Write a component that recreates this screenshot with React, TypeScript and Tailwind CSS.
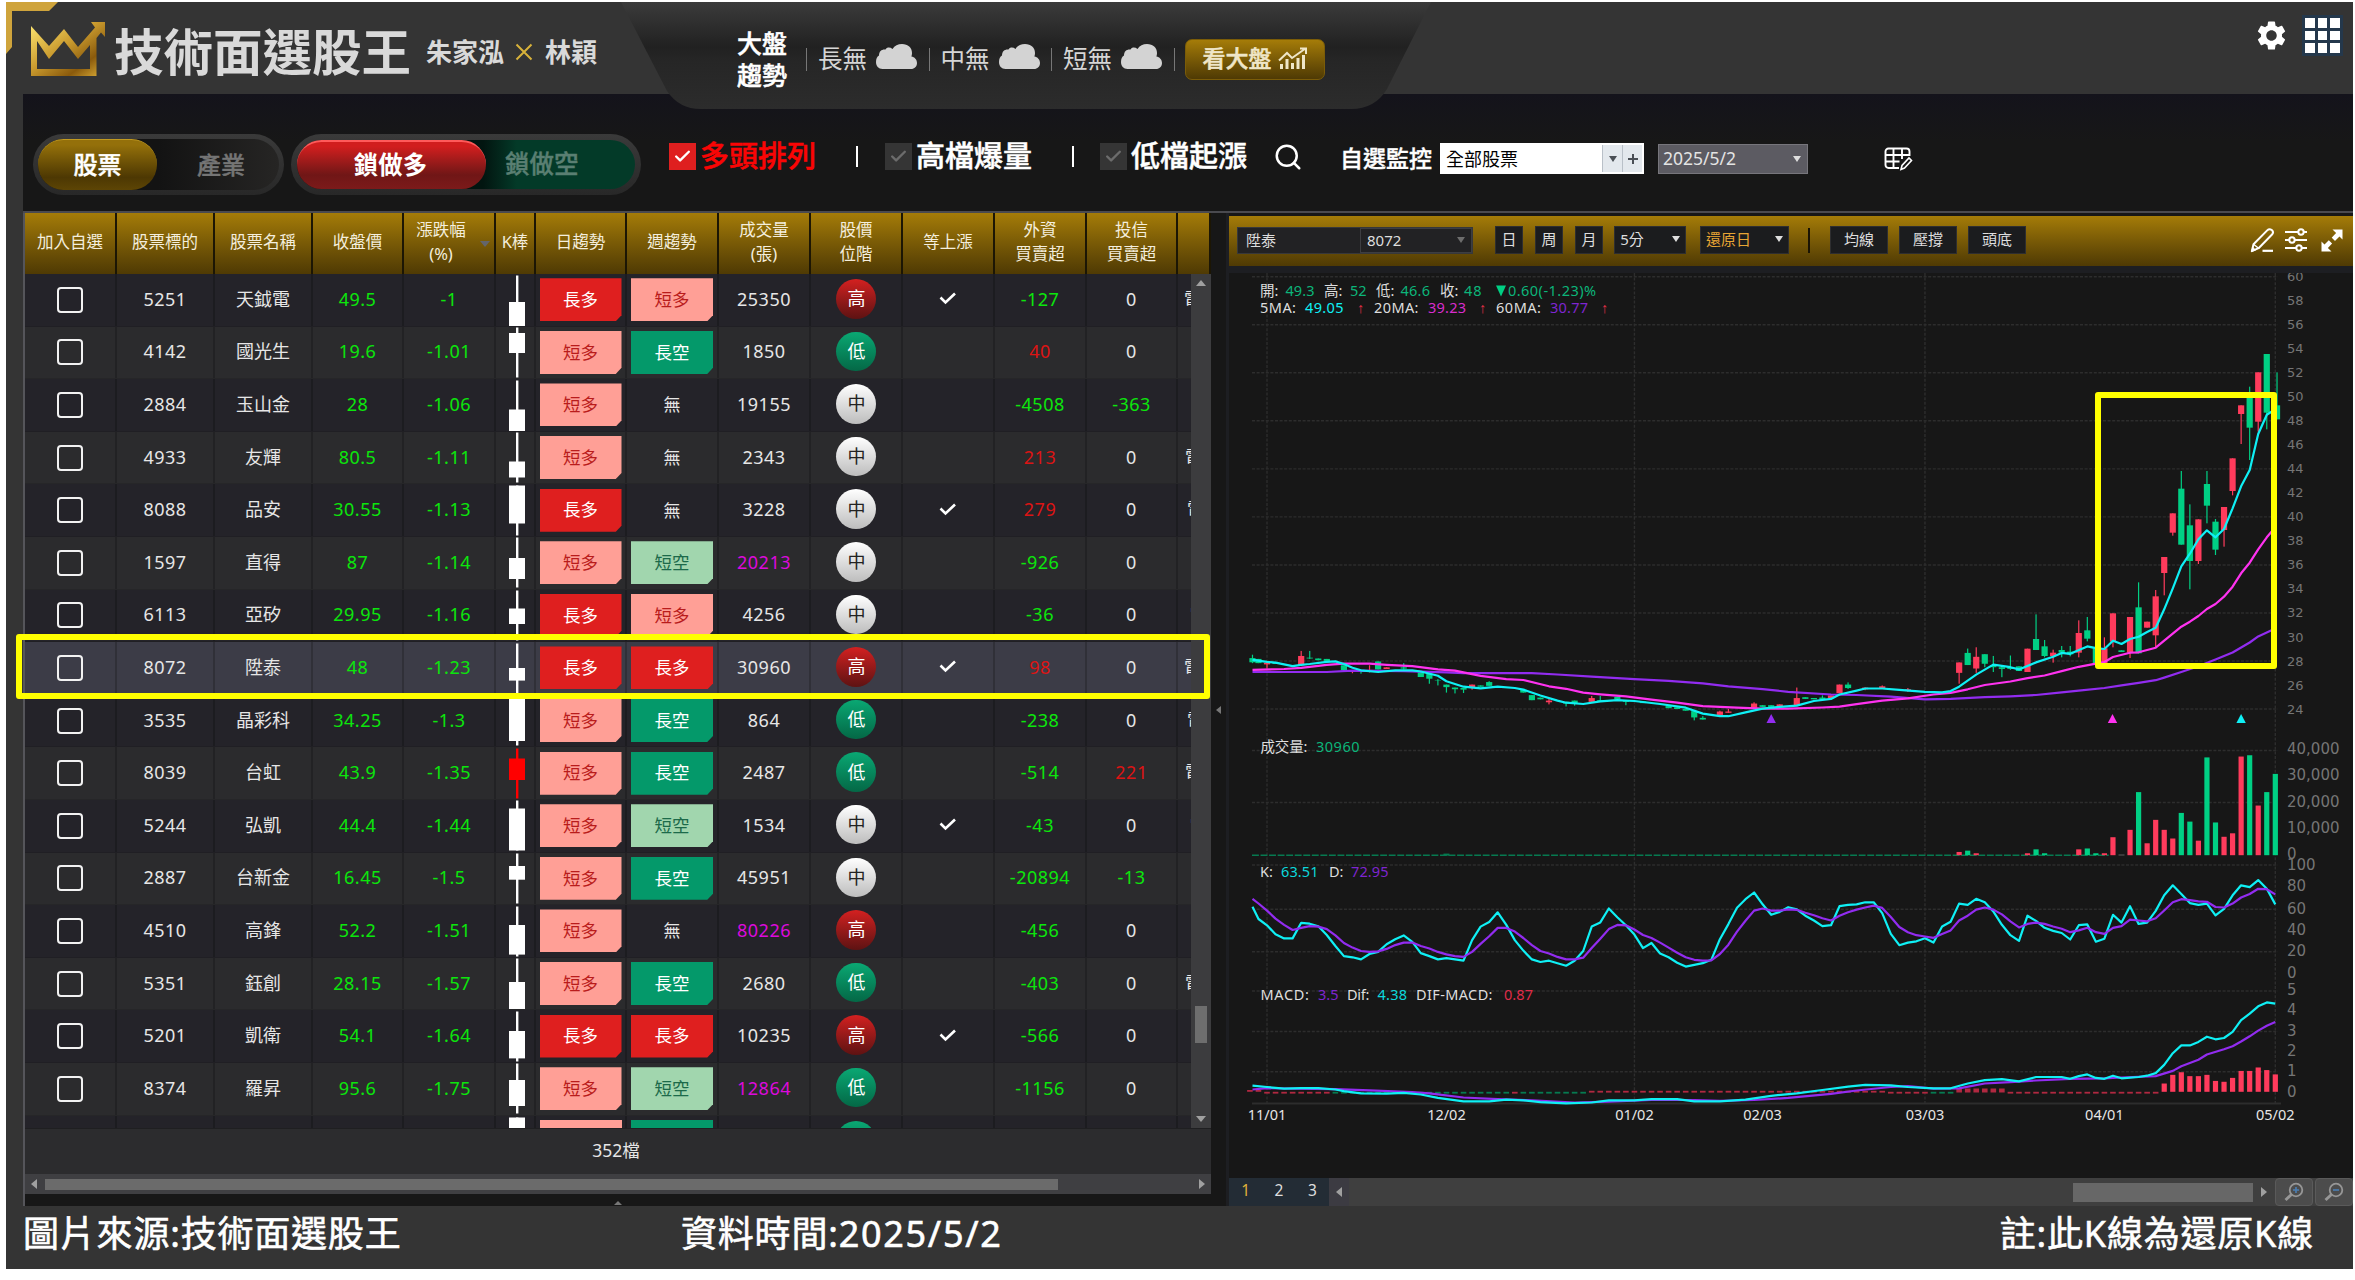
import type { ReactNode } from 'react'
import { Search, Check } from 'lucide-react'
import { MdSettings } from 'react-icons/md'

// ── Stock table data ──────────────────────────────────────────────────────────

type Trend = '長多' | '短多' | '長空' | '短空' | '無'
type Level = '高' | '中' | '低'

type Stock = {
  code: string
  name: string
  price: string
  change: string
  k: [number, number]
  kRed?: boolean
  day: Trend
  week: Trend
  volume: string
  hot?: boolean
  level: Level
  rising?: boolean
  foreign: string
  trust: string
  tail?: number
}

const STOCKS: Stock[] = [
  { code: '5251', name: '天鉞電', price: '49.5', change: '-1', k: [28, 52], day: '長多', week: '短多', volume: '25350', level: '高', rising: true, foreign: '-127', trust: '0', tail: 6 },
  { code: '4142', name: '國光生', price: '19.6', change: '-1.01', k: [7, 27], day: '短多', week: '長空', volume: '1850', level: '低', foreign: '40', trust: '0' },
  { code: '2884', name: '玉山金', price: '28', change: '-1.06', k: [30.5, 52], day: '短多', week: '無', volume: '19155', level: '中', foreign: '-4508', trust: '-363' },
  { code: '4933', name: '友輝', price: '80.5', change: '-1.11', k: [30.5, 46.5], day: '短多', week: '無', volume: '2343', level: '中', foreign: '213', trust: '0', tail: 7 },
  { code: '8088', name: '品安', price: '30.55', change: '-1.13', k: [1.5, 39.5], day: '長多', week: '無', volume: '3228', level: '中', rising: true, foreign: '279', trust: '0', tail: 9 },
  { code: '1597', name: '直得', price: '87', change: '-1.14', k: [22, 43], day: '短多', week: '短空', volume: '20213', hot: true, level: '中', foreign: '-926', trust: '0' },
  { code: '6113', name: '亞矽', price: '29.95', change: '-1.16', k: [19.5, 35], day: '長多', week: '短多', volume: '4256', level: '中', foreign: '-36', trust: '0', tail: 12 },
  { code: '8072', name: '陞泰', price: '48', change: '-1.23', k: [26, 38.6], day: '長多', week: '長多', volume: '30960', level: '高', rising: true, foreign: '98', trust: '0', tail: 6 },
  { code: '3535', name: '晶彩科', price: '34.25', change: '-1.3', k: [1.5, 47], day: '短多', week: '長空', volume: '864', level: '低', foreign: '-238', trust: '0', tail: 9 },
  { code: '8039', name: '台虹', price: '43.9', change: '-1.35', k: [11.5, 33], kRed: true, day: '短多', week: '長空', volume: '2487', level: '低', foreign: '-514', trust: '221', tail: 7 },
  { code: '5244', name: '弘凱', price: '44.4', change: '-1.44', k: [9.5, 51.5], day: '短多', week: '短空', volume: '1534', level: '中', rising: true, foreign: '-43', trust: '0', tail: 12 },
  { code: '2887', name: '台新金', price: '16.45', change: '-1.5', k: [14, 27.7], day: '短多', week: '長空', volume: '45951', level: '中', foreign: '-20894', trust: '-13' },
  { code: '4510', name: '高鋒', price: '52.2', change: '-1.51', k: [20, 49.6], day: '短多', week: '無', volume: '80226', hot: true, level: '高', foreign: '-456', trust: '0' },
  { code: '5351', name: '鈺創', price: '28.15', change: '-1.57', k: [25, 52], day: '短多', week: '長空', volume: '2680', level: '低', foreign: '-403', trust: '0', tail: 7 },
  { code: '5201', name: '凱衛', price: '54.1', change: '-1.64', k: [21, 48.4], day: '長多', week: '長多', volume: '10235', level: '高', rising: true, foreign: '-566', trust: '0' },
  { code: '8374', name: '羅昇', price: '95.6', change: '-1.75', k: [18, 44], day: '短多', week: '短空', volume: '12864', hot: true, level: '低', foreign: '-1156', trust: '0' },
]

const HEADERS: string[][] = [
  ['加入自選'], ['股票標的'], ['股票名稱'], ['收盤價'], ['漲跌幅', '(%)'], ['K棒'], ['日趨勢'], ['週趨勢'],
  ['成交量', '(張)'], ['股價', '位階'], ['等上漲'], ['外資', '買賣超'], ['投信', '買賣超'], [],
]

const COLS = 'grid grid-cols-[92px_98px_98px_91px_92px_40px_91px_92px_92px_92px_92px_92px_91px_1fr]'

const TREND_STYLES: Record<Trend, string> = {
  長多: 'bg-[#df1f1f] text-white',
  短多: 'bg-[#ff9f96] text-[#b91c1c]',
  長空: 'bg-[#04996a] text-white',
  短空: 'bg-[#a1d6ae] text-[#1c6a4a]',
  無: '',
}

const LEVEL_STYLES: Record<Level, string> = {
  高: 'from-[#d42020] to-[#5e1212] text-white',
  中: 'from-white to-[#bdbdbd] text-[#222]',
  低: 'from-[#0aa873] to-[#046846] text-white',
}

// ── Table pieces ──────────────────────────────────────────────────────────────

function Cell({ children, className = '' }: { children?: ReactNode; className?: string }) {
  return (
    <div className={`flex h-full min-w-0 items-center justify-center overflow-hidden border-r-2 border-black/20 ${className}`}>
      {children}
    </div>
  )
}

function TrendTag({ trend }: { trend: Trend }) {
  if (trend === '無') return <span className="text-[17px]">無</span>
  return (
    <span
      className={`flex h-[43px] w-[82px] shrink-0 items-center justify-center text-[17.5px] [clip-path:polygon(0_0,100%_0,100%_86%,93%_100%,0_100%)] ${TREND_STYLES[trend]}`}
    >
      {trend}
    </span>
  )
}

function signColour(value: string) {
  if (value.startsWith('-')) return 'text-[#0ce60c]'
  return value === '0' ? 'text-[#e6e6e6]' : 'text-[#dc1414]'
}

function KBar({ body, red }: { body: [number, number]; red?: boolean }) {
  const fill = red ? '#ff0000' : '#ffffff'
  return (
    <svg className="block shrink-0" width="16" height="52.6" viewBox="0 0 16 52.6">
      <rect x="7" y="1.5" width="2.4" height="50" fill={fill} />
      <rect x="0" y={body[0]} width="16" height={body[1] - body[0]} fill={fill} />
    </svg>
  )
}

function StockRow({ stock, index }: { stock: Stock; index: number }) {
  const bg = stock.code === '8072' ? 'bg-[#3c3c47]' : index % 2 ? 'bg-[#2b2b2d]' : 'bg-[#242329]'
  return (
    <div className={`${COLS} h-[52.6px] shrink-0 border-b border-black/10 text-[18px] tracking-[0.5px] text-[#e6e6e6] ${bg}`}>
      <Cell>
        <span className="size-[26px] rounded-[4px] border-[2.5px] border-[#f2f2f2]" />
      </Cell>
      <Cell className="pb-0.5">{stock.code}</Cell>
      <Cell className="pb-0.5 tracking-normal">{stock.name}</Cell>
      <Cell className="pb-0.5 text-[#0ce60c]">{stock.price}</Cell>
      <Cell className="pb-0.5 text-[#0ce60c]">{stock.change}</Cell>
      <Cell className="pl-[3px]">
        <KBar body={stock.k} red={stock.kRed} />
      </Cell>
      <Cell className="tracking-normal"><TrendTag trend={stock.day} /></Cell>
      <Cell className="tracking-normal"><TrendTag trend={stock.week} /></Cell>
      <Cell className={`pb-0.5 ${stock.hot ? 'text-[#dc0adc]' : ''}`}>{stock.volume}</Cell>
      <Cell className="pb-0.5">
        <span className={`flex size-[39.5px] shrink-0 items-center justify-center rounded-full bg-linear-to-b pb-px pl-px text-[18px] tracking-normal ${LEVEL_STYLES[stock.level]}`}>
          {stock.level}
        </span>
      </Cell>
      <Cell className="pb-0.5">
        {stock.rising && (
          <svg width="18" height="13" viewBox="0 0 18 13" fill="none" stroke="#fff" strokeWidth="2.6">
            <path d="M1.5 5.5 6.5 10.5 16 1.5" />
          </svg>
        )}
      </Cell>
      <Cell className={`pb-0.5 ${signColour(stock.foreign)}`}>{stock.foreign}</Cell>
      <Cell className={`pb-0.5 ${signColour(stock.trust)}`}>{stock.trust}</Cell>
      <div className="flex items-center overflow-hidden pb-0.5">
        {stock.tail && <span style={{ paddingLeft: stock.tail }}>電</span>}
      </div>
    </div>
  )
}

function StockTable() {
  return (
    <section className="flex w-[1188px] shrink-0 flex-col border-l-2 border-[#55555a]">
      <div className={`${COLS} h-[61px] bg-linear-to-b from-[#a57c08] to-[#4f3a04] text-[16.5px] leading-[24px] text-[#f4eedd]`}>
        {HEADERS.map((lines, i) => (
          <div key={i} className={`relative flex flex-col items-center justify-center whitespace-nowrap border-r-2 border-[#1c1604] pb-1 ${i === 13 ? 'border-r-0' : ''} ${i === 4 ? 'pr-4' : ''}`}>
            {lines.map((line) => (
              <span key={line}>{line}</span>
            ))}
            {i === 4 && (
              <svg className="absolute right-1 top-7" width="10" height="6"><path d="M0 0h10L5 6z" fill="#63656b" /></svg>
            )}
          </div>
        ))}
      </div>

      <div className="flex h-[854px]">
        <div className="flex min-w-0 flex-1 flex-col overflow-hidden">
          {STOCKS.map((stock, i) => (
            <StockRow key={stock.code} stock={stock} index={i} />
          ))}
          <div className={`${COLS} h-[52.6px] shrink-0 bg-[#242329]`}>
            <Cell /><Cell /><Cell /><Cell /><Cell />
            <Cell className="pl-[3px]"><KBar body={[1.5, 40]} /></Cell>
            <Cell><span className="h-[43px] w-[82px] bg-[#ff9f96]" /></Cell>
            <Cell><span className="h-[43px] w-[82px] bg-[#04996a]" /></Cell>
            <Cell />
            <Cell className="pb-0.5"><span className="size-[39.5px] rounded-full bg-linear-to-b from-[#0aa873] to-[#046846]" /></Cell>
            <Cell /><Cell /><Cell />
          </div>
        </div>
        <div className="flex w-5 flex-col items-center bg-[#3c3c3e] py-1.5">
          <svg width="10" height="6"><path d="M0 6h10L5 0z" fill="#a0a0a0" /></svg>
          <div className="mt-[720px] h-[37px] w-3 bg-[#6e6e6e]" />
          <svg className="mt-auto" width="10" height="6"><path d="M0 0h10L5 6z" fill="#a0a0a0" /></svg>
        </div>
      </div>

      <div className="flex h-[46px] items-center justify-center border-t border-[#1f1f21] bg-[#2c2c2e] pb-0.5 pr-1 text-[17.5px] text-[#e6e6e6]">352檔</div>
      <div className="flex h-5 items-center bg-[#3f3f42] px-1.5">
        <svg width="6" height="10"><path d="M6 0v10L0 5z" fill="#a0a0a0" /></svg>
        <div className="ml-2 h-[11px] w-[1013px] bg-[#6b6b6b]" />
        <svg className="ml-auto" width="6" height="10"><path d="M0 0v10L6 5z" fill="#a0a0a0" /></svg>
      </div>
      <div className="flex h-[11px] items-end justify-center bg-[#171717]">
        <svg width="8" height="4"><path d="M0 4h8L4 0z" fill="#777" /></svg>
      </div>
    </section>
  )
}

// ── Chart ─────────────────────────────────────────────────────────────────────

const UP = '#ff3b5c'
const DOWN = '#00d084'
const CYAN = '#0ff0f5'
const PINK = '#ff32f0'
const PURPLE = '#922cf0'

const ORIGIN_X = 1267
const STEP = 8.545
const xAt = (i: number) => ORIGIN_X + STEP * i

// three zoom factors the samples were stored with
const wide = (y: number) => 600 + y / 2.376
const mid = (y: number) => 600 + y / 2.306
const close = (y: number) => 250 + y / 3

type Scale = (y: number) => number

function pairs(scale: Scale, flat: number[]) {
  const out: string[] = []
  for (let n = 0; n < flat.length; n += 2) {
    out.push(`${xAt(flat[n]).toFixed(1)},${scale(flat[n + 1]).toFixed(1)}`)
  }
  return out.join(' ')
}

function run(scale: Scale, start: number, ys: number[]) {
  return pairs(scale, ys.flatMap((y, n) => [start + n, y]))
}

const MA5 = [
  pairs(wide, [-1.7, 142, 0, 147, 1, 149, 3, 157, 4, 154, 5, 152, 7, 147, 8, 146, 9, 152, 10, 161, 11, 167, 13, 171, 15, 167, 17, 167, 18, 170, 20, 180, 21, 193, 23, 206, 25, 210, 27, 206, 29, 209, 30, 213, 32, 227, 34, 239, 35, 244, 37, 247, 39, 241, 41, 238, 43, 240, 46, 247, 49, 256, 51, 270, 53, 276, 54, 276, 56, 267, 58, 258, 60, 254, 62, 251]),
  pairs(mid, [64, 233, 66, 228, 67, 218, 69, 209, 70, 204, 72, 204, 74, 207, 77, 212, 79, 213, 80, 210, 81, 200, 83, 172, 85, 149, 87, 155, 88, 160, 90, 144, 92, 131, 93, 122, 94, 124, 96, 107, 97, 111]),
  run(close, 98, [1197, 1172, 1182, 1167, 1160, 1146, 1133, 1078, 1015, 949, 911, 868, 841, 862, 837, 775, 709, 660, 552, 494, 478]),
].join(' ')

const MA20 = [
  pairs(wide, [-1.7, 166, 2, 164, 4, 161, 7, 154, 9, 151, 12, 151, 14, 154, 17, 157, 20, 165, 22, 168, 25, 180, 28, 188, 30, 190, 33, 205, 35, 211, 37, 220, 39, 224, 42, 229, 45, 237, 48, 244, 51, 252, 55, 256, 58, 258, 61, 258]),
  pairs(mid, [65, 248, 67, 246, 69, 240, 72, 232, 75, 227, 78, 218, 80, 214, 82, 206, 84, 196, 87, 188, 89, 180, 91, 174, 93, 164, 95, 154, 97, 147]),
  pairs(close, [98, 1236, 99, 1221, 101, 1208, 102, 1207, 104, 1193, 105, 1172, 107, 1130, 108, 1115, 109, 1098, 110, 1077, 111, 1062, 112, 1040, 113, 1010, 114, 970, 115, 938, 116, 898, 117, 862, 118, 832]),
].join(' ')

const MA60 = [
  pairs(wide, [-1.7, 171, 7, 171, 10, 168, 16, 169, 21, 172, 23, 174, 31, 174, 34, 177, 38, 182, 43, 188, 47, 192, 51, 198, 54, 205, 58, 212, 61, 218]),
  pairs(mid, [66, 218, 69, 219, 73, 223, 77, 229, 80, 228, 84, 224, 87, 222, 90, 219, 93, 213, 95, 209, 98, 203, 100, 197, 102, 191, 104, 185, 105, 179, 107, 166, 109, 153, 111, 137, 113, 121, 115, 98, 116, 84, 118, 66]),
].join(' ')

const K_LINE = [
  pairs(wide, [-1.7, 729]),
  run(wide, -1, [758, 773, 794, 804, 804, 767, 769, 775, 796, 822, 846, 849, 854, 841, 836, 818, 806, 797, 812, 839, 846, 854, 851, 854, 857, 808, 776, 765, 742, 772, 808, 833, 854, 860, 857, 863, 869, 857, 834, 776, 766, 733, 754, 773, 795, 827, 815, 840, 849, 862, 871, 867, 863, 855, 806, 770, 731, 711, 695, 723, 748, 741, 730, 735]),
  run(mid, 63, [728, 739, 752, 750, 706, 703, 702, 697, 697, 722, 770, 796, 790, 787, 780, 790, 753, 742, 700, 703, 689, 697, 718, 749, 773, 786, 728, 740, 756, 763, 768, 783, 750, 748, 788, 781, 726, 744, 706, 747, 744, 717, 681, 658, 678, 699, 703, 700, 727, 712, 681, 658, 662, 646, 666, 702]),
].join(' ')

const D_LINE = [
  pairs(wide, [-1.7, 710]),
  run(wide, -1, [721, 738, 757, 772, 784, 779, 775, 776, 782, 797, 815, 826, 834, 836, 835, 829, 820, 814, 814, 822, 828, 836, 842, 846, 848, 836, 817, 799, 779, 779, 788, 803, 820, 834, 840, 848, 854, 854, 850, 827, 805, 782, 772, 773, 783, 796, 803, 814, 826, 838, 849, 855, 857, 856, 841, 819, 788, 762, 738, 733, 738, 738, 735, 736]),
  run(mid, 63, [721, 727, 734, 739, 728, 720, 714, 709, 705, 710, 731, 754, 766, 773, 776, 779, 770, 762, 739, 728, 714, 709, 714, 725, 741, 755, 747, 744, 747, 753, 758, 766, 762, 756, 766, 770, 756, 752, 737, 739, 741, 734, 716, 697, 690, 692, 695, 696, 708, 709, 700, 686, 678, 666, 667, 679]),
].join(' ')

const DIF = [
  pairs(wide, [-1.7, 1154, 0, 1157, 2, 1161, 4, 1160, 6, 1160, 8, 1163, 9, 1167, 11, 1172, 14, 1173, 16, 1171, 18, 1175, 20, 1183, 23, 1191, 26, 1191, 28, 1187, 30, 1189, 32, 1193, 35, 1196, 38, 1194, 40, 1189, 43, 1189, 45, 1186, 48, 1186, 50, 1191, 53, 1191, 56, 1187, 59, 1178, 62, 1172]),
  pairs(mid, [65, 1130, 68, 1122, 70, 1118, 73, 1119, 75, 1123, 78, 1126, 80, 1126, 82, 1115, 84, 1107, 86, 1105, 88, 1110, 90, 1100, 93, 1100, 94, 1104, 95, 1098, 96, 1094, 97, 1102, 98, 1104, 99, 1097, 100, 1103, 102, 1100, 103, 1097, 104, 1091, 105, 1072, 106, 1045, 107, 1027, 108, 1027, 109, 1019, 110, 1007, 111, 1013, 112, 1010, 113, 996, 114, 969, 115, 954, 116, 937, 117, 928, 118, 931]),
].join(' ')

const MACD = [
  pairs(wide, [-1.7, 1163, 0, 1160, 3, 1161, 8, 1162, 12, 1165, 17, 1169, 19, 1172, 23, 1182, 27, 1186, 31, 1189, 36, 1194, 40, 1192, 45, 1188, 50, 1188, 53, 1190, 57, 1188, 61, 1183]),
  pairs(mid, [66, 1139, 69, 1131, 73, 1123, 75, 1121, 78, 1127, 81, 1126, 84, 1115, 87, 1112, 90, 1108, 94, 1104, 98, 1103, 100, 1101, 104, 1098, 106, 1086, 107, 1075, 109, 1060, 110, 1048, 112, 1036, 113, 1029, 114, 1018, 115, 1006, 116, 993, 117, 982, 118, 973]),
].join(' ')

// index, body top, body bottom, wick top, wick bottom, rising
type Candle = [number, number, number, number, number, 0 | 1]

const CANDLES_WIDE: Candle[] = [
  [-1.7, 138, 148, 130, 150, 0], [-1, 140, 150, 140, 150, 0], [0, 149, 153, 145, 163, 1], [1, 149, 152, 149, 152, 0],
  [4, 133, 155, 121, 155, 1], [5, 137, 139, 121, 140, 0], [6, 139, 143, 139, 143, 0], [7, 140, 145, 140, 145, 0],
  [9, 155, 167, 155, 167, 0], [10, 167, 171, 167, 174, 1], [11, 168, 170, 166, 175, 0], [12, 166, 168, 155, 172, 1],
  [13, 146, 165, 146, 165, 0], [14, 160, 164, 160, 164, 1], [16, 160, 163, 150, 165, 0], [18, 172, 183, 170, 183, 0],
  [19, 175, 187, 175, 199, 0], [20, 190, 191, 188, 203, 0], [21, 201, 207, 201, 220, 0], [22, 208, 212, 208, 222, 0],
  [23, 209, 213, 209, 221, 0], [24, 201, 208, 201, 213, 1], [25, 203, 206, 203, 206, 0], [26, 195, 204, 193, 204, 0],
  [30, 213, 220, 213, 220, 0], [31, 226, 238, 226, 238, 0], [32, 232, 236, 232, 236, 0], [33, 239, 243, 235, 248, 1],
  [35, 242, 246, 242, 253, 0], [36, 239, 245, 239, 251, 0], [38, 233, 242, 228, 242, 1], [39, 238, 241, 228, 241, 0],
  [41, 230, 236, 230, 236, 0], [42, 239, 242, 238, 250, 0], [44, 241, 245, 241, 245, 0], [47, 252, 257, 252, 257, 0],
  [48, 255, 259, 255, 259, 0], [49, 259, 263, 259, 263, 0], [50, 264, 279, 264, 286, 0], [51, 280, 284, 276, 284, 0],
  [53, 265, 273, 263, 273, 1], [54, 265, 268, 259, 268, 1], [57, 246, 256, 243, 256, 1], [58, 250, 254, 250, 254, 0],
  [59, 250, 254, 250, 254, 0], [60, 248, 252, 248, 252, 1], [62, 233, 250, 208, 250, 1], [63, 231, 235, 231, 235, 0],
]

const CANDLES_MID: Candle[] = [
  [64, 226, 229, 226, 229, 0], [65, 225, 230, 220, 232, 0], [66, 220, 226, 220, 226, 1], [67, 195, 215, 195, 215, 1],
  [68, 195, 203, 190, 205, 0], [70, 202, 206, 202, 208, 1], [72, 199, 203, 197, 203, 1], [75, 206, 210, 203, 212, 1],
  [81, 144, 168, 144, 193, 1], [82, 122, 150, 112, 150, 0], [83, 131, 158, 109, 168, 1], [84, 125, 147, 125, 155, 0],
  [85, 151, 155, 129, 166, 0], [86, 155, 159, 150, 178, 0], [87, 155, 159, 128, 161, 0],
]

const CANDLES_CLOSE: Candle[] = [
  [88, 1249, 1263, 1249, 1263, 0], [89, 1196, 1266, 1196, 1266, 1], [90, 1167, 1200, 1093, 1200, 0],
  [91, 1189, 1218, 1170, 1222, 0], [92, 1208, 1218, 1199, 1238, 1], [93, 1200, 1208, 1188, 1222, 0],
  [94, 1205, 1213, 1188, 1219, 0], [95, 1149, 1208, 1111, 1222, 1], [96, 1141, 1166, 1101, 1174, 0],
  [97, 1195, 1245, 1195, 1245, 0], [98, 1195, 1245, 1162, 1245, 1], [99, 1090, 1175, 1090, 1192, 1],
  [100, 1201, 1206, 1201, 1206, 0], [101, 1101, 1208, 1101, 1224, 1], [102, 1072, 1210, 997, 1210, 0],
  [103, 1115, 1133, 1115, 1133, 1], [104, 1039, 1156, 1020, 1192, 1], [105, 921, 969, 921, 1036, 1],
  [106, 790, 848, 790, 857, 1], [107, 716, 884, 663, 884, 0], [108, 826, 933, 763, 1018, 0],
  [109, 808, 933, 808, 942, 1], [110, 702, 767, 663, 820, 0], [111, 815, 899, 807, 915, 0],
  [112, 771, 840, 771, 890, 1], [113, 625, 723, 625, 736, 1], [114, 466, 492, 466, 582, 1],
  [115, 437, 533, 410, 630, 0], [116, 367, 515, 367, 545, 1], [117, 312, 488, 312, 538, 0],
  [118.2, 466, 508, 367, 508, 0],
]

// index, top, rising
const VOLUMES: [number, number, 0 | 1][] = [
  [81, 581, 1], [82, 578, 0], [83, 584, 1], [89, 584, 1], [90, 575, 0], [91, 584, 0], [95, 575, 1], [96, 573, 0],
  [97, 584, 0], [98, 584, 1], [99, 547, 1], [101, 530, 1], [102, 443, 0], [103, 561, 1], [104, 507, 1], [105, 530, 1],
  [106, 550, 1], [107, 491, 0], [108, 511, 0], [109, 555, 1], [110, 363, 0], [111, 513, 0], [112, 546, 1],
  [113, 538, 1], [114, 361, 1], [115, 358, 0], [116, 474, 1], [117, 443, 0], [118, 401, 0],
]

const MACD_BARS = [1115, 1095, 1089, 1098, 1098, 1095, 1109, 1111, 1102, 1086, 1086, 1078, 1084, 1094]

function Candles({ data, scale }: { data: Candle[]; scale: Scale }) {
  return (
    <g>
      {data.map(([i, top, bottom, high, low, up]) => (
        <g key={i} fill={up ? UP : DOWN}>
          <rect x={xAt(i) - 0.6} y={scale(high)} width="1.2" height={scale(low) - scale(high)} />
          <rect x={xAt(i) - 3.1} y={scale(top)} width="6.2" height={scale(bottom) - scale(top)} />
        </g>
      ))}
    </g>
  )
}

type Legend = [number, string, string, number?]

function LegendRow({ y, items }: { y: number; items: Legend[] }) {
  return (
    <g fontSize="14.5">
      {items.map(([x, text, fill, width]) => (
        <text key={x} x={x} y={y} fill={fill} textLength={width} className={text === '↑' ? "font-['Liberation_Sans']" : undefined}>
          {text}
        </text>
      ))}
    </g>
  )
}

const W = '#dedede'
const G = '#0cb57a'

const PRICE_TICKS = Array.from({ length: 19 }, (_, n) => 60 - n * 2)
const priceY = (p: number) => 276.7 + (60 - p) * 12.01

const AXIS: [number, string][] = [
  [749, '40,000'], [775, '30,000'], [801.5, '20,000'], [827.5, '10,000'], [854, '0'],
  [864.5, '100'], [886, '80'], [908.5, '60'], [930, '40'], [951, '20'], [973, '0'],
  [990, '5'], [1009.5, '4'], [1030.5, '3'], [1051, '2'], [1071, '1'], [1092, '0'],
]

const DATES: [number, string][] = [
  [0, '11/01'], [21, '12/02'], [43, '01/02'], [58, '02/03'], [77, '03/03'], [98, '04/01'], [118, '05/02'],
]

function smallBarColour(i: number) {
  if (i >= 8 && i <= 37 && i !== 29) return '#067a50'
  if (i >= 78 && i <= 80) return '#067a50'
  return '#b02840'
}

function Chart() {
  return (
    <svg className="block bg-[#171717] font-['Noto_Sans','Noto_Sans_CJK_TC',sans-serif]" width="1124" height="905" viewBox="1229 273 1124 905">
      <g stroke="#2d2d2d" strokeWidth="1.4" strokeDasharray="3 1.6">
        {[60, 56, 52, 48, 44, 40, 36, 32, 28, 24].map((p) => (
          <line key={p} x1="1252" x2="2278" y1={priceY(p)} y2={priceY(p)} />
        ))}
        {[750.5, 802.5, 865, 909.3, 951.7, 991, 1031.5, 1071.8].map((y) => (
          <line key={y} x1="1252" x2="2278" y1={y} y2={y} />
        ))}
        {[0, 43, 77, 118].map((i) => (
          <line key={i} x1={xAt(i)} x2={xAt(i)} y1="273" y2="1103" />
        ))}
      </g>
      <line x1="1252" x2="2281" y1="1103.5" y2="1103.5" stroke="#2d2d2d" strokeWidth="2" />

      <Candles data={CANDLES_WIDE} scale={wide} />
      <Candles data={CANDLES_MID} scale={mid} />
      <Candles data={CANDLES_CLOSE} scale={close} />

      <line x1="1252" x2={xAt(98.5)} y1="855.2" y2="855.2" stroke="#067a50" strokeWidth="1.4" strokeDasharray="6.9 1.645" />
      <rect x={xAt(21) - 3} y="853.6" width="6" height="2" fill="#067a50" />
      <rect x={xAt(100) - 3} y="854.2" width="6" height="1.6" fill="#444" />
      {VOLUMES.map(([i, top, up]) => (
        <rect key={i} x={xAt(i) - 2.6} y={mid(top)} width="5.2" height={854.6 - mid(top) + 0.6} fill={up ? UP : DOWN} />
      ))}

      {Array.from({ length: 107 }, (_, n) => n - 2).map((i) => (
        <rect
          key={i}
          x={xAt(i) - 2.8}
          y={i > 37 && i < 73 ? 1090.8 : i >= 81 && i < 87 ? 1088.5 : i < 0 ? 1090 : 1091.8}
          width="5.6"
          height={i >= 81 && i < 87 ? 4 : 1.8}
          fill={smallBarColour(i)}
        />
      ))}
      {MACD_BARS.map((top, n) => (
        <rect key={n} x={xAt(105 + n) - 2.6} y={mid(top)} width="5.2" height={1091.8 - mid(top)} fill={UP} />
      ))}

      <g fill="none" strokeWidth="2.2" strokeLinejoin="round">
        <polyline points={MA60} stroke={PURPLE} />
        <polyline points={MA20} stroke={PINK} />
        <polyline points={MA5} stroke={CYAN} />
        <polyline points={K_LINE} stroke={CYAN} />
        <polyline points={D_LINE} stroke={PURPLE} />
        <polyline points={MACD} stroke={PURPLE} />
        <polyline points={DIF} stroke={CYAN} />
      </g>

      <path d="M1766.5 723h9.4l-4.7-9z" fill={PURPLE} />
      <path d="M2107.8 723h9.4l-4.7-9z" fill={PINK} />
      <path d="M2236.4 723h9.4l-4.7-9z" fill={CYAN} />

      <LegendRow
        y={295.5}
        items={[
          [1260, '開:', W], [1285.5, '49.3', G, 29], [1324, '高:', W], [1350, '52', G, 16.5], [1376, '低:', W],
          [1400.5, '46.6', G, 29.5], [1440, '收:', W], [1464, '48', G, 17.5], [1508, '0.60(-1.23)%', G, 88],
        ]}
      />
      <path d="M1496 285.5h10l-5 11z" fill={DOWN} />
      <LegendRow
        y={313}
        items={[
          [1260, '5MA:', W, 36], [1305, '49.05', CYAN, 38.5], [1357, '↑', '#f03048'], [1374, '20MA:', W, 44.5],
          [1428, '39.23', '#d92ccd', 38], [1479, '↑', '#f03048'], [1496, '60MA:', W, 45], [1550, '30.77', '#7f25d0', 38],
          [1601, '↑', '#f03048'],
        ]}
      />
      <LegendRow y={751.5} items={[[1260.5, '成交量:', W, 47], [1316, '30960', G, 43.5]]} />
      <LegendRow y={876.5} items={[[1260, 'K:', W], [1281, '63.51', '#0cd8dc', 37.5], [1329, 'D:', W], [1351, '72.95', '#7f25d0', 37.5]]} />
      <LegendRow
        y={999.5}
        items={[
          [1260.5, 'MACD:', W, 48.5], [1318, '3.5', '#7f25d0', 20.5], [1347, 'Dif:', W, 22.5], [1377.5, '4.38', '#0cd8dc', 29.5],
          [1416, 'DIF-MACD:', W, 76.5], [1504, '0.87', '#e02c4a', 29],
        ]}
      />

      <g className="font-['DejaVu_Sans',sans-serif]" fill="#757575">
        {PRICE_TICKS.map((p) => (
          <text key={p} x="2287" y={priceY(p) + 4.5} fontSize="13">{p}</text>
        ))}
        {AXIS.map(([y, label]) => (
          <text key={y} x="2287" y={y + 5.2} fontSize="15">{label}</text>
        ))}
      </g>
      <g fill="#e6e6e6" fontSize="14.5" textAnchor="middle">
        {DATES.map(([i, label]) => (
          <text key={label} x={xAt(i)} y="1120">{label}</text>
        ))}
      </g>
    </svg>
  )
}

function ToolButton({ children, className = '' }: { children: ReactNode; className?: string }) {
  return (
    <button className={`flex h-7 items-center justify-center whitespace-nowrap border border-[#2e2e30] bg-[#1b1c1e] pb-0.5 text-[15px] text-[#dedede] ${className}`}>
      {children}
    </button>
  )
}

function Caret({ fill = '#dedede' }: { fill?: string }) {
  return <svg width="8" height="6"><path d="M0 0h8L4 6z" fill={fill} /></svg>
}

function ZoomGlyph({ plus }: { plus?: boolean }) {
  return (
    <svg width="20" height="20" viewBox="0 0 20 20" fill="none" stroke="#969696">
      <circle cx="12" cy="8" r="6.3" strokeWidth="1.8" />
      <path d="M7.5 12.5 1.5 18" strokeWidth="3" />
      <path d={plus ? 'M9 8h6M12 5v6' : 'M9 8h6'} stroke="#4b7fb5" strokeWidth="1.6" />
    </svg>
  )
}

function ChartPanel() {
  return (
    <section className="flex min-w-0 flex-1 flex-col border-l-[3px] border-[#1d1e22] pt-[3px]">
      <div className="flex h-[50px] items-center bg-linear-to-b from-[#a57c08] to-[#4f3a04] pb-0.5 pl-2 pr-2.5">
        <div className="flex h-[27px] w-[236px] items-center border border-[#37383a] bg-[#222224] text-[15px] text-[#dedede]">
          <span className="w-[122px] pl-2">陞泰</span>
          <span className="flex h-full flex-1 items-center justify-between border border-[#3d3e42] px-1.5">
            8072 <Caret fill="#6d6d6d" />
          </span>
        </div>
        <ToolButton className="ml-[22px] w-7">日</ToolButton>
        <ToolButton className="ml-3 w-7">周</ToolButton>
        <ToolButton className="ml-3 w-7">月</ToolButton>
        <ToolButton className="ml-[11px] w-[72px] gap-7">5分 <Caret /></ToolButton>
        <ToolButton className="ml-3.5 w-[89px] gap-6 text-[#e8a534]">還原日 <Caret /></ToolButton>
        <span className="ml-[19px] h-[25px] w-0.5 bg-[#1a1404]" />
        <ToolButton className="ml-5 w-[58px]">均線</ToolButton>
        <ToolButton className="ml-[11px] w-[58px]">壓撐</ToolButton>
        <ToolButton className="ml-[11px] w-[58px]">頭底</ToolButton>
        <div className="ml-auto flex items-center">
          <svg width="25" height="25" viewBox="0 0 25 25" fill="none" stroke="#fff" strokeWidth="2" strokeLinejoin="round">
            <path d="M1.800 23.200 3.500 16.200 17.200 2.400c1.400-1.400 3-1.500 4.600-.4 1.500 1.300 1.500 3 .2 4.500L8.600 20.200z" />
            <path d="M3.500 16.200 8.600 20.200" strokeWidth="1.400" />
            <path d="M1.500 23.500 2.800 19.500 5.500 22z" fill="#fff" strokeWidth="1" />
            <path d="M12.500 22.800H23" strokeWidth="2.200" />
          </svg>
          <svg className="ml-2.5" width="22" height="24" viewBox="0 0 22 24" fill="none" stroke="#fff" strokeWidth="2">
            <path d="M0 4h13M19 4h3M0 12h4M10 12h12M0 20h11M17 20h5" />
            <circle cx="16" cy="4" r="2.700" />
            <circle cx="7" cy="12" r="2.700" />
            <circle cx="14" cy="20" r="2.700" />
          </svg>
          <svg className="ml-3.5" width="22" height="23" viewBox="0 0 22 23" fill="#fff">
            <path d="M11.500.500h10v10l-3-3-4.800 4.800-3.300-3.300 4.700-4.900zM10.500 22.500H.500v-10l3 3 4.300-4.300 3.300 3.300-4.200 4.400z" />
            <path d="M9.500 8.500l4.500 4.500" stroke="#7a5c07" strokeWidth="1.500" />
          </svg>
        </div>
      </div>
      <div className="h-[7px] bg-[#1d1e22]" />
      <Chart />
      <div className="flex h-7 items-center bg-[#3f3f3f] text-[15.5px] text-[#dedede]">
        <div className="flex h-full w-[100px] items-center justify-around bg-[#232c35] pb-0.5">
          <span className="text-[#e0b13a]">1</span>
          <span>2</span>
          <span>3</span>
        </div>
        <div className="flex h-full w-5 items-center justify-center bg-[#3c3b42]">
          <svg width="6" height="10"><path d="M6 0v10L0 5z" fill="#a0a0a0" /></svg>
        </div>
        <div className="ml-auto h-[19px] w-[180px] bg-[#676767]" />
        <svg className="ml-2" width="6" height="10"><path d="M0 0v10L6 5z" fill="#a0a0a0" /></svg>
        <div className="ml-2 flex h-full w-[38px] items-center justify-center rounded-sm border border-[#5a5a5a] bg-[#4c4c4c]"><ZoomGlyph plus /></div>
        <div className="ml-0.5 flex h-full w-[38px] items-center justify-center rounded-sm border border-[#5a5a5a] bg-[#4c4c4c]"><ZoomGlyph /></div>
      </div>
    </section>
  )
}

// ── Header ────────────────────────────────────────────────────────────────────

function Logo() {
  return (
    <svg width="76" height="58" viewBox="0 0 76 58">
      <defs>
        <linearGradient id="gold" x1="0" y1="0" x2="1" y2="1">
          <stop offset="0" stopColor="#ffe873" />
          <stop offset=".45" stopColor="#c99a2e" />
          <stop offset=".75" stopColor="#8a5a0c" />
          <stop offset="1" stopColor="#e0b23a" />
        </linearGradient>
      </defs>
      <path
        fill="url(#gold)"
        d="M0 6 18 26 33 9 47 27 64 7.500 60 2H74V17L70 12.500 65.500 18V56H0zM6 21V49H59V25L47 39 33 21 18 39z"
        fillRule="evenodd"
      />
    </svg>
  )
}

function Cloud() {
  return (
    <svg width="41" height="25" viewBox="0 0 41 25" fill="#d3d3d3">
      <path d="M6.500 25C2.500 25 0 22 0 18c0-3 1-5.500 3-6.500C3 7 6 5 9.500 5.500 11 3 14 3 16.500 5 18.500 1.500 22 0 26 0c6 0 10 3.500 10 9 0 1.500-.3 2.500-.6 3.500C38.500 13 41 15.500 41 19s-2.500 6-6 6z" />
    </svg>
  )
}

function MarketTrend() {
  return (
    <div className="absolute left-[615px] top-0 z-10 h-[107px] w-[810px]">
      <svg className="absolute inset-0" width="810" height="107" viewBox="0 0 810 107">
        <defs>
          <linearGradient id="tray" x1="0" y1="0" x2="0" y2="1">
            <stop offset="0" stopColor="#3b3b3b" />
            <stop offset=".42" stopColor="#212121" />
            <stop offset=".55" stopColor="#262626" />
            <stop offset="1" stopColor="#2c2c2c" />
          </linearGradient>
        </defs>
        <path d="M0 0H810L766 87Q754 107 730 107H80Q58 107 46 89z" fill="url(#tray)" />
      </svg>
      <div className="relative flex h-full items-center pl-[116px] text-[24.5px] text-[#d6d6d6]">
        <div className="mt-1.5 flex w-[50px] flex-col text-[25px] font-medium leading-[32px] text-white [-webkit-text-stroke:0.5px]">
          <span>大盤</span>
          <span>趨勢</span>
        </div>
        <div className="ml-[19px] mt-2 flex items-center gap-[11.5px]">
          {['長無', '中無', '短無'].map((label) => (
            <div key={label} className="flex items-center">
              <span className="h-[23px] w-px bg-[#777]" />
              <span className="ml-[11px]">{label}</span>
              <span className="mb-1.5 ml-[9px]"><Cloud /></span>
            </div>
          ))}
          <span className="h-[23px] w-px bg-[#777]" />
          <button className="-ml-px flex h-[41px] w-[140px] items-center justify-center gap-1.5 whitespace-nowrap rounded-[7px] border border-[#7b5c08] bg-linear-to-b from-[#a57c08] to-[#4f3a04] pb-0.5 text-[23px] font-medium text-[#efe6c8] [-webkit-text-stroke:0.5px]">
            看大盤
            <svg width="30" height="23" viewBox="0 0 30 23" fill="none" stroke="#efe6c8" strokeWidth="2">
              <path d="M1 13.500 9 6l5 5L27.500 1.500M22 1.500h6V7" />
              <path d="M3.500 22v-5M9 22V12M14.500 22v-6M20 22V11M25.500 22V8" strokeWidth="3" />
            </svg>
          </button>
        </div>
      </div>
    </div>
  )
}

function Header() {
  return (
    <header className="relative h-[92px] shrink-0 bg-[#343434]">
      <svg className="absolute left-0 top-0" width="54" height="52"><path d="M0 0H52L43 9H6V45L0 52z" fill="#cfa43c" /></svg>
      <div className="flex h-full items-start pl-[25px] pr-[10px]">
        <div className="mt-[18px]"><Logo /></div>
        <h1 className="ml-[7px] mt-3.5 text-[49.5px] font-bold leading-[72px] text-[#d9d9d9]">技術面選股王</h1>
        <div className="ml-[15px] mt-8 flex items-center text-[26px] font-bold leading-[36px] text-[#d9d9d9]">
          朱家泓
          <svg className="ml-[11px] mr-3" width="18" height="18"><path d="M1.500 1.500 16.500 16.500M16.500 1.500 1.500 16.500" stroke="#d8b23a" strokeWidth="2" /></svg>
          林穎
        </div>
        <MdSettings className="ml-auto mt-4" size={35} color="#fff" />
        <div className="ml-[13px] mt-[13px] grid grid-cols-3 gap-[3px] bg-[#24384c] p-[3px]">
          {Array.from({ length: 9 }, (_, i) => (
            <span key={i} className="size-[9.600px] bg-white" />
          ))}
        </div>
      </div>
    </header>
  )
}

// ── Filters ───────────────────────────────────────────────────────────────────

function FilterCheck({ label, on }: { label: string; on?: boolean }) {
  return (
    <label className="flex items-center gap-1">
      <span className={`flex size-[27px] items-center justify-center ${on ? 'bg-[#df1f1f]' : 'bg-[#353535]'}`}>
        <Check size={19} strokeWidth={3} color={on ? '#fff' : '#6c6c6c'} />
      </span>
      <span className={`pb-0.5 text-[29px] font-medium leading-none [-webkit-text-stroke:0.5px] ${on ? 'text-[#fa0505]' : 'text-white'}`}>{label}</span>
    </label>
  )
}

function Filters() {
  return (
    <div className="flex h-[117px] shrink-0 items-start whitespace-nowrap bg-linear-to-b from-[#14131b] to-[#171717] to-40% pl-2.5 pt-10">
      <div className="flex h-[61px] w-[251px] rounded-full bg-linear-to-b from-[#3a3a3a] to-[#282828] p-[5px] text-[24px] font-medium [-webkit-text-stroke:0.4px]">
        <div className="flex flex-1 rounded-full bg-linear-to-r from-[#131313] from-50% to-[#262524]">
          <span className="flex w-[119px] items-center justify-center rounded-full border-t border-[#c29a20] bg-linear-to-b from-[#94700a] from-10% via-[#4d3803] via-75% to-[#5d4505] text-white">股票</span>
          <span className="flex flex-1 items-center justify-center pl-1.5 text-[#757575]">產業</span>
        </div>
      </div>
      <div className="ml-[7px] flex h-[61px] w-[350px] rounded-full bg-linear-to-b from-[#3a3a3a] to-[#282828] p-1.5 text-[24.500px] font-medium">
        <div className="flex flex-1 rounded-full bg-linear-to-r from-[#021510] from-55% to-[#033a28] to-65%">
          <span className="flex w-[189px] items-center justify-center rounded-full border-t-2 border-[#ff5a5a] bg-linear-to-b from-[#d11e1e] from-10% via-[#701616] via-70% to-[#7c1a1a] pr-0.5 font-bold text-white">鎖做多</span>
          <span className="ml-[19px] flex items-center text-[#5a7f72] [-webkit-text-stroke:0.4px]">鎖做空</span>
        </div>
      </div>

      <div className="ml-7 mt-2 flex h-[29px] items-center">
        <FilterCheck label="多頭排列" on />
        <span className="ml-10 mr-[27px] h-[21px] w-0.5 bg-white" />
        <FilterCheck label="高檔爆量" />
        <span className="ml-10 mr-[26px] h-[21px] w-0.5 bg-white" />
        <FilterCheck label="低檔起漲" />
        <Search className="ml-[26px]" size={30} color="#fff" strokeWidth={2} />
      </div>

      <span className="ml-[37px] mt-[7px] text-[23px] font-medium leading-[34px] text-white [-webkit-text-stroke:0.4px]">自選監控</span>
      <div className="ml-2 mt-[9px] flex h-[31px] w-[204px] items-center border-2 border-white bg-white text-[18px] text-black">
        <span className="flex-1 pl-1">全部股票</span>
        <span className="flex h-full w-5 items-center justify-center border-l border-[#b9c0c8] bg-[#e3e8ed]"><Caret fill="#4a4f55" /></span>
        <span className="flex h-full w-5 items-center justify-center border-l border-[#b9c0c8] bg-[#e3e8ed]">
          <svg width="10" height="10"><path d="M5 0v10M0 5h10" stroke="#4a4f55" strokeWidth="2" /></svg>
        </span>
      </div>
      <div className="ml-3.5 mt-2.5 flex h-[30px] w-[150px] items-center justify-between border border-[#77767c] bg-[#5c5b62] pb-px pl-1 pr-1.5 text-[17.500px] text-[#e4e4e4]">
        2025/5/2 <Caret />
      </div>
      <svg className="ml-[76px] mt-[13px]" width="29" height="24" viewBox="0 0 29 24" fill="none" stroke="#fff" strokeWidth="1.900">
        <path d="M15 21H4.500a3 3 0 0 1-3-3V4.500a3 3 0 0 1 3-3h18a3 3 0 0 1 3 3V9M1.500 8h24M1.500 14.500h14M9.500 1.500V21M18 1.500V12" />
        <path d="m17 22.500 1-4 7-7.500 2.500 2.500-7 7.500z" strokeWidth="1.600" />
      </svg>
    </div>
  )
}

// ── Page ──────────────────────────────────────────────────────────────────────

export default function App() {
  return (
    <div className="h-[1280px] w-[2355px] overflow-hidden bg-white pb-[11px] pl-1.5 pr-0.5 pt-0.5 font-['Noto_Sans','Noto_Sans_CJK_TC',sans-serif] leading-none">
      <div className="relative flex h-[1267px] flex-col bg-[#343434]">
        <Header />
        <MarketTrend />
        <div className="ml-[17px] flex h-[1112px] shrink-0 flex-col bg-[#171717]">
          <Filters />
          <div className="flex flex-1 border-t-2 border-[#4a4a4f]">
            <StockTable />
            <div className="flex w-[15px] items-center justify-center">
              <svg width="5" height="8"><path d="M5 0v8L0 4z" fill="#777" /></svg>
            </div>
            <ChartPanel />
          </div>
        </div>
        <footer className="flex flex-1 items-center justify-between whitespace-nowrap pb-2 pl-[17px] pr-[39px] text-[36px] tracking-[0.8px] text-white [-webkit-text-stroke:0.6px]">
          <span className="w-[658px]">圖片來源:技術面選股王</span>
          <span className="mr-auto">資料時間:<span className="tracking-[1.7px]">2025/5/2</span></span>
          <span>註:此K線為還原K線</span>
        </footer>

        {/* highlighted row and breakout range */}
        <div className="absolute left-[10px] top-[632px] h-[65px] w-[1194px] rounded-[3px] border-[6px] border-[#ffff00]" />
        <div className="absolute left-[2089px] top-[390px] h-[277px] w-[182px] rounded-[3px] border-[6px] border-[#ffff00]" />
      </div>
    </div>
  )
}
